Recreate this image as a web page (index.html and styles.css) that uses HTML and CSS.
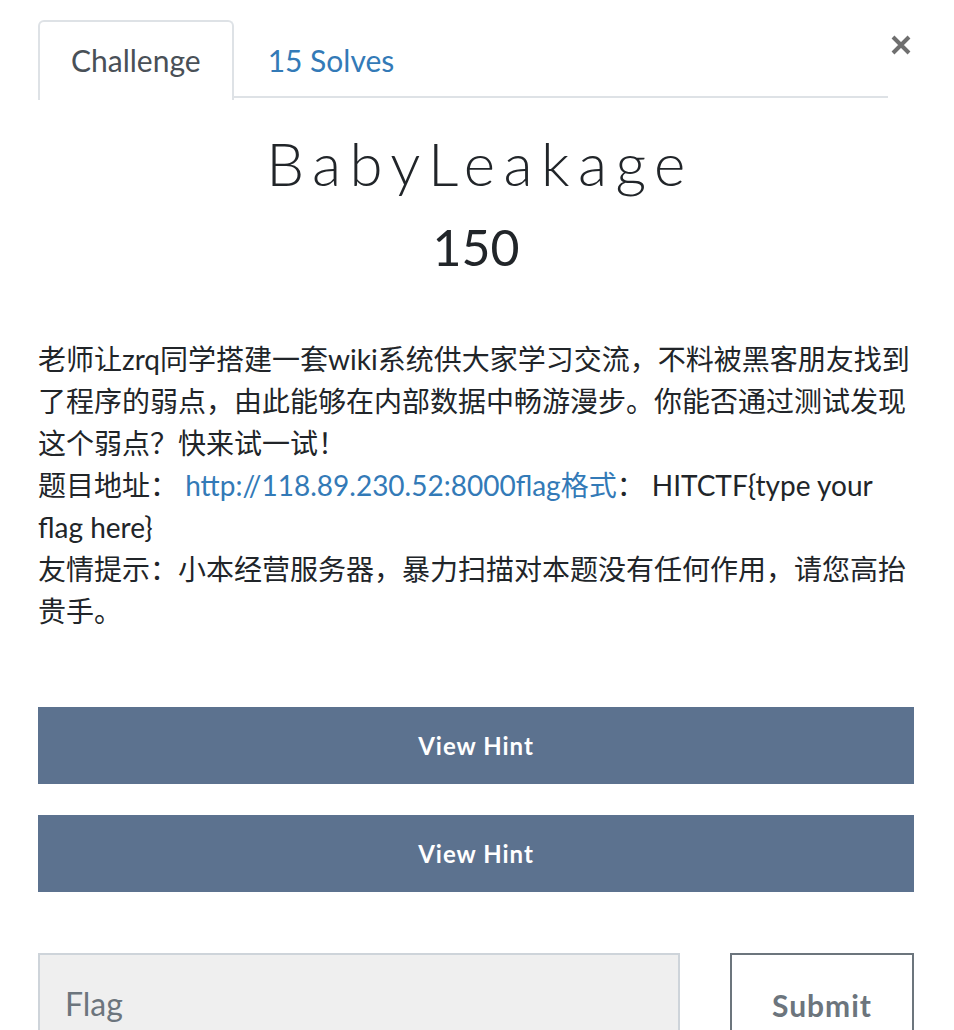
FILE: index.html
```html
<!DOCTYPE html>
<html lang="zh">
<head>
<meta charset="utf-8">
<title>BabyLeakage</title>
<link rel="stylesheet" href="styles.css">
</head>
<body>
<div class="modal">
  <div class="header">
    <ul class="tabs">
      <li class="tab active">Challenge</li>
      <li class="tab">15 Solves</li>
    </ul>
    <button class="close" aria-label="Close">
      <svg width="22" height="22" viewBox="0 0 22 22"><path d="M3 3L19 19M19 3L3 19" stroke="#6f6f6f" stroke-width="4" stroke-linecap="butt"/></svg>
    </button>
  </div>
  <h2 class="title">BabyLeakage</h2>
  <h3 class="value">150</h3>
  <div class="desc">
    <p>老师让zrq同学搭建一套wiki系统供大家学习交流，不料被黑客朋友找到了程序的弱点，由此能够在内部数据中畅游漫步。你能否通过测试发现这个弱点？快来试一试！<br>题目地址： <a href="#">http://118.89.230.52:8000flag格式</a>： HITCTF{type your flag here}<br>友情提示：小本经营服务器，暴力扫描对本题没有任何作用，请您高抬贵手。</p>
  </div>
  <div class="hints">
    <button class="hint">View Hint</button>
    <button class="hint">View Hint</button>
  </div>
  <div class="submit-row">
    <input class="flag" type="text" placeholder="Flag">
    <button class="submit">Submit</button>
  </div>
</div>
</body>
</html>
```
FILE: styles.css
```css
html, body {
  margin: 0;
  padding: 0;
  background: #fff;
}
body {
  font-family: Lato, "Noto Sans CJK SC", sans-serif;
  color: #212529;
}
.modal {
  width: 876px;
  padding: 20px 0 0 38px;
}
.header {
  display: flex;
  align-items: flex-start;
}
.tabs {
  flex: 1;
  display: flex;
  list-style: none;
  margin: 0;
  padding: 0;
  border-bottom: 2px solid #dee2e6;
  height: 76px;
}
.tab {
  font-size: 30px;
  line-height: 76px;
  padding: 0 32px;
  color: #337ab7;
  border: 2px solid transparent;
  border-bottom: none;
  border-radius: 6px 6px 0 0;
}
.tab.active {
  color: #495057;
  background: #fff;
  border-color: #dee2e6;
  height: 78px;
  padding: 0 31px;
}
.close {
  width: 26px;
  height: 26px;
  margin-top: 12px;
  padding: 0;
  border: none;
  background: none;
  display: flex;
  align-items: center;
  justify-content: center;
}
.title {
  margin: 30px 0 0;
  text-align: center;
  font-weight: 300;
  font-size: 60px;
  letter-spacing: 8.4px;
  text-indent: 8px;
  line-height: 70px;
  color: #212529;
}
.value {
  margin: 19px 0 0;
  text-align: center;
  font-weight: 400;
  font-size: 50px;
  line-height: 60px;
}
.desc {
  margin-top: 61px;
  font-size: 28px;
  line-height: 42px;
}
.desc p {
  margin: 0;
}
.desc a {
  color: #337ab7;
  text-decoration: none;
}
.hints {
  margin-top: 75px;
  display: flex;
  flex-direction: column;
  gap: 31px;
}
.hint {
  height: 77px;
  border: none;
  background: #5c728f;
  color: #fff;
  font-family: Lato, sans-serif;
  font-weight: 700;
  font-size: 24px;
  letter-spacing: 1px;
}
.submit-row {
  margin-top: 61px;
  display: flex;
  gap: 50px;
}
.flag {
  width: 642px;
  height: 100px;
  box-sizing: border-box;
  border: 2px solid #ced4da;
  background: #efefef;
  font-family: Lato, sans-serif;
  font-size: 32px;
  padding: 0 25px;
  color: #495057;
}
.flag::placeholder {
  color: #6c757d;
}
.submit {
  width: 184px;
  height: 104px;
  box-sizing: border-box;
  border: 2px solid #6c757d;
  background: #fff;
  color: #6c757d;
  font-family: Lato, sans-serif;
  font-weight: 700;
  font-size: 30px;
  letter-spacing: 1px;
  padding: 0;
}
```
